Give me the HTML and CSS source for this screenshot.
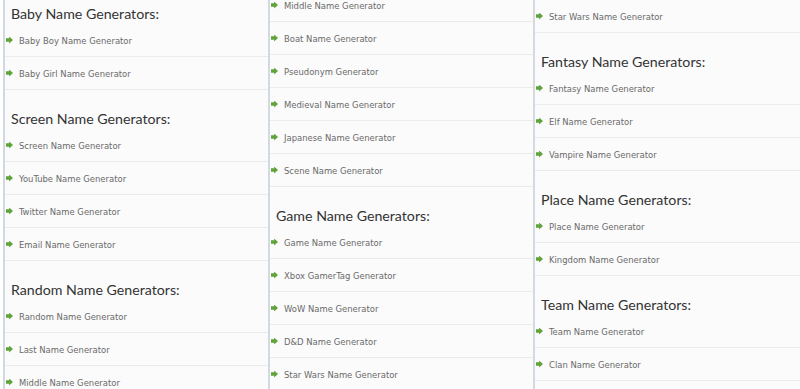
FILE: index.html
```html
<!DOCTYPE html>
<html lang="en">
<head>
    <meta charset="UTF-8">
    <title>Name Generators</title>
    <link rel="stylesheet" href="styles.css">
</head>
<body>
    <div class="columns">
        <div class="col">
            <div class="list list-1">
                <h2>Baby Name Generators:</h2>
                <a class="item" href="#"><span class="arrow"></span>Baby Boy Name Generator</a>
                <a class="item" href="#"><span class="arrow"></span>Baby Girl Name Generator</a>
                <h2>Screen Name Generators:</h2>
                <a class="item" href="#"><span class="arrow"></span>Screen Name Generator</a>
                <a class="item" href="#"><span class="arrow"></span>YouTube Name Generator</a>
                <a class="item" href="#"><span class="arrow"></span>Twitter Name Generator</a>
                <a class="item" href="#"><span class="arrow"></span>Email Name Generator</a>
                <h2>Random Name Generators:</h2>
                <a class="item" href="#"><span class="arrow"></span>Random Name Generator</a>
                <a class="item" href="#"><span class="arrow"></span>Last Name Generator</a>
                <a class="item" href="#"><span class="arrow"></span>Middle Name Generator</a>
            </div>
        </div>
        <div class="col">
            <div class="list list-2">
                <a class="item" href="#"><span class="arrow"></span>Middle Name Generator</a>
                <a class="item" href="#"><span class="arrow"></span>Boat Name Generator</a>
                <a class="item" href="#"><span class="arrow"></span>Pseudonym Generator</a>
                <a class="item" href="#"><span class="arrow"></span>Medieval Name Generator</a>
                <a class="item" href="#"><span class="arrow"></span>Japanese Name Generator</a>
                <a class="item" href="#"><span class="arrow"></span>Scene Name Generator</a>
                <h2>Game Name Generators:</h2>
                <a class="item" href="#"><span class="arrow"></span>Game Name Generator</a>
                <a class="item" href="#"><span class="arrow"></span>Xbox GamerTag Generator</a>
                <a class="item" href="#"><span class="arrow"></span>WoW Name Generator</a>
                <a class="item" href="#"><span class="arrow"></span>D&amp;D Name Generator</a>
                <a class="item" href="#"><span class="arrow"></span>Star Wars Name Generator</a>
            </div>
        </div>
        <div class="col col-last">
            <div class="list">
                <a class="item" href="#"><span class="arrow"></span>Star Wars Name Generator</a>
                <h2>Fantasy Name Generators:</h2>
                <a class="item" href="#"><span class="arrow"></span>Fantasy Name Generator</a>
                <a class="item" href="#"><span class="arrow"></span>Elf Name Generator</a>
                <a class="item" href="#"><span class="arrow"></span>Vampire Name Generator</a>
                <h2>Place Name Generators:</h2>
                <a class="item" href="#"><span class="arrow"></span>Place Name Generator</a>
                <a class="item" href="#"><span class="arrow"></span>Kingdom Name Generator</a>
                <h2>Team Name Generators:</h2>
                <a class="item" href="#"><span class="arrow"></span>Team Name Generator</a>
                <a class="item" href="#"><span class="arrow"></span>Clan Name Generator</a>
            </div>
        </div>
    </div>
</body>
</html>
```

FILE: styles.css
```css
body {
    margin: 0;
    background: #fff;
    height: 389px;
    overflow: hidden;
}
.columns {
    display: flex;
    height: 389px;
    padding-left: 3px;
    overflow: hidden;
}
.col {
    flex: none;
    width: 263px;
    border-left: 2px solid #d2d9e3;
    background: #fbfbfb;
    overflow: hidden;
}
.col-last {
    flex: 1;
}
.list {
    display: flex;
    flex-direction: column;
}
.list-1 {
    margin-top: -15px;
}
.list-2 {
    margin-top: -11px;
}
.list h2 {
    margin: 0;
    height: 39px;
    box-sizing: border-box;
    padding: 19px 0 0 6px;
    font-family: 'Lato', 'Liberation Sans', sans-serif;
    font-size: 14.2px;
    font-weight: normal;
    line-height: 20px;
    color: #333;
}
.item {
    height: 33px;
    box-sizing: border-box;
    display: flex;
    align-items: center;
    gap: 6px;
    padding-left: 1px;
    border-bottom: 1px solid #ebebeb;
    font-family: 'DejaVu Sans Condensed', 'DejaVu Sans', sans-serif;
    font-size: 9.4px;
    color: #6a6a6a;
    text-decoration: none;
}
.arrow {
    width: 7px;
    height: 7px;
    background: #5fa33a;
    clip-path: polygon(0 25%, 45% 25%, 45% 0, 100% 50%, 45% 100%, 45% 75%, 0 75%);
}
```
